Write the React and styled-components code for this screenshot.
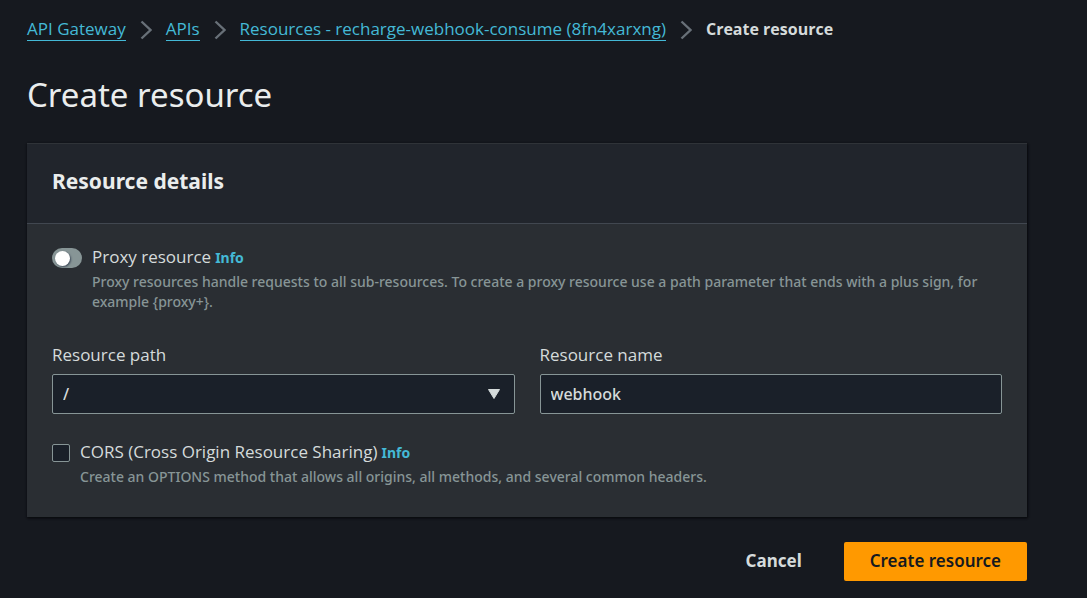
import React from "react";
import styled, { createGlobalStyle } from "styled-components";

const GlobalStyle = createGlobalStyle`
  *, *::before, *::after { box-sizing: border-box; }
  body {
    margin: 0;
    background: #16191f;
    color: #d5dbdb;
    font-family: "Noto Sans", "Open Sans", sans-serif;
    font-size: 17px;
    font-weight: 500;
    line-height: 24px;
  }
  button, input, select { font: inherit; color: inherit; }
  label { font-family: "Open Sans", "Noto Sans", sans-serif; }
`;

const Page = styled.main`
  padding: 17px 60px 13px 27px;
`;

const Breadcrumbs = styled.ol`
  display: flex;
  flex-wrap: wrap;
  margin: 0;
  padding: 0;
  list-style: none;
`;

const Crumb = styled.li`
  display: flex;
  align-items: center;
  font-family: "Open Sans", "Noto Sans", sans-serif;
  font-size: ${(p) => (p.$current ? "16px" : "17px")};
  font-weight: ${(p) => (p.$current ? 700 : 500)};
`;

const CrumbLink = styled.a`
  color: #44b9d6;
  line-height: 22px;
  text-decoration: none;
  border-bottom: 1px solid currentColor;
`;

const Separator = styled.svg`
  width: 12px;
  height: 20px;
  margin: 2px 14px 0;
  fill: none;
  stroke: #687078;
  stroke-width: 2.4;
`;

const Title = styled.h1`
  margin: 32px 0 26px;
  color: #eaeded;
  font-size: 33px;
  font-weight: 400;
  line-height: 44px;
`;

const Panel = styled.section`
  background: #2a2e33;
  border-top: 1px solid #2f3338;
  box-shadow: 0 1px 2px #0a0c10, 1px 1px 2px #0a0c10;
`;

const PanelHeader = styled.header`
  padding: 22px 25px 27px;
  background: #21252c;
  border-bottom: 1px solid #414750;
`;

const PanelTitle = styled.h2`
  margin: 0;
  color: #eaeded;
  font-size: 21px;
  font-weight: 700;
  line-height: 30px;
`;

const PanelBody = styled.div`
  display: grid;
  gap: 26px;
  padding: 21px 25px 30px;
`;

const Option = styled.div`
  display: flex;
  align-items: flex-start;
  gap: 10px;
`;

const Description = styled.p`
  margin: 2px 0 0;
  color: #879596;
  font-size: 14px;
  line-height: 20px;
`;

const InfoLink = styled.a`
  margin-left: 4px;
  color: #44b9d6;
  font-size: 14px;
  font-weight: 700;
  text-decoration: none;
`;

const Toggle = styled.input`
  appearance: none;
  flex: none;
  display: flex;
  align-items: center;
  width: 30px;
  height: 20px;
  margin: 3px 0 0;
  padding: 0 3px;
  border-radius: 10px;
  background: #879596;

  &::before {
    content: "";
    width: 15px;
    height: 15px;
    border-radius: 50%;
    background: #fff;
    box-shadow: 1px 1px 2px #414d5c;
  }
  &:checked { justify-content: flex-end; background: #00a1c9; }
`;

const Checkbox = styled.input`
  appearance: none;
  flex: none;
  width: 18px;
  height: 18px;
  margin: 4px 0 0;
  border: 1px solid #879596;
  border-radius: 2px;
  background: #1a2029;
  &:checked { background: #00a1c9; }
`;

const Fields = styled.div`
  display: grid;
  grid-template-columns: 1fr 1fr;
  gap: 25px;
  margin-top: 5px;
`;

const Field = styled.div`
  display: grid;
  gap: 7px;
`;

const Control = styled.input`
  && { font-size: 16px; }
  width: 100%;
  height: 40px;
  padding: 0 10px;
  border: 1px solid #879596;
  border-radius: 2px;
  background: #1a2029;
  appearance: none;
`;

const SelectBox = styled.div`
  display: grid;
  align-items: center;
  > * { grid-area: 1 / 1; }
`;

const Caret = styled.svg`
  justify-self: end;
  width: 14px;
  height: 12px;
  margin-right: 14px;
  fill: #d5dbdb;
  stroke: #d5dbdb;
  stroke-linejoin: round;
  pointer-events: none;
`;

const Actions = styled.div`
  display: flex;
  justify-content: flex-end;
  gap: 16px;
  margin-top: 25px;
`;

const Button = styled.button`
  height: 39px;
  padding: 0 26px 2px;
  border: 0;
  border-radius: 2px;
  background: ${(p) => (p.$primary ? "#ff9900" : "transparent")};
  color: ${(p) => (p.$primary ? "#16191f" : "#d5dbdb")};
  font-weight: ${(p) => (p.$primary ? 600 : 700)};
`;

const crumbs = ["API Gateway", "APIs", "Resources - recharge-webhook-consume (8fn4xarxng)"];

const proxyHelp =
  "Proxy resources handle requests to all sub-resources. To create a proxy resource use a path parameter that ends with a plus sign, for example {proxy+}.";

export default function App() {
  return (
    <>
      <GlobalStyle />
      <Page>
        <nav aria-label="Breadcrumbs">
          <Breadcrumbs>
            {crumbs.map((name) => (
              <Crumb key={name}>
                <CrumbLink href="#">{name}</CrumbLink>
                <Separator viewBox="0 0 12 20" aria-hidden="true">
                  <path d="M1.5 1.5 10.5 10 1.5 18.5" />
                </Separator>
              </Crumb>
            ))}
            <Crumb $current aria-current="page">Create resource</Crumb>
          </Breadcrumbs>
        </nav>
        <Title>Create resource</Title>
        <form onSubmit={(e) => e.preventDefault()}>
          <Panel>
            <PanelHeader>
              <PanelTitle>Resource details</PanelTitle>
            </PanelHeader>
            <PanelBody>
              <Option>
                <Toggle type="checkbox" role="switch" id="proxy" />
                <div>
                  <label htmlFor="proxy">Proxy resource</label>
                  <InfoLink href="#">Info</InfoLink>
                  <Description>{proxyHelp}</Description>
                </div>
              </Option>
              <Fields>
                <Field>
                  <label htmlFor="path">Resource path</label>
                  <SelectBox>
                    <Control as="select" id="path">
                      <option>/</option>
                    </Control>
                    <Caret viewBox="0 0 14 12" aria-hidden="true">
                      <path d="M1.5 1.5H12.5L7 10.5Z" />
                    </Caret>
                  </SelectBox>
                </Field>
                <Field>
                  <label htmlFor="name">Resource name</label>
                  <Control id="name" type="text" defaultValue="webhook" />
                </Field>
              </Fields>
              <Option>
                <Checkbox type="checkbox" id="cors" />
                <div>
                  <label htmlFor="cors">CORS (Cross Origin Resource Sharing)</label>
                  <InfoLink href="#">Info</InfoLink>
                  <Description>
                    Create an OPTIONS method that allows all origins, all methods, and several common headers.
                  </Description>
                </div>
              </Option>
            </PanelBody>
          </Panel>
          <Actions>
            <Button type="button">Cancel</Button>
            <Button type="submit" $primary>Create resource</Button>
          </Actions>
        </form>
      </Page>
    </>
  );
}
